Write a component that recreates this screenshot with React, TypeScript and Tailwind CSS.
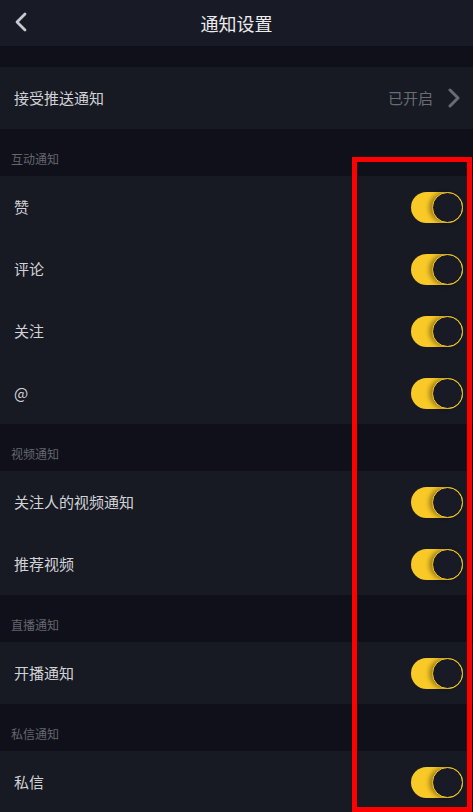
type Group = { title: string; items: string[] };

const groups: Group[] = [
  { title: "互动通知", items: ["赞", "评论", "关注", "@"] },
  { title: "视频通知", items: ["关注人的视频通知", "推荐视频"] },
  { title: "直播通知", items: ["开播通知"] },
  { title: "私信通知", items: ["私信"] },
];

// Yellow switch, always on in this screen
const Toggle = () => (
  <div className="relative w-[52px] h-[31px] rounded-full bg-[#f9c927]">
    <div className="absolute right-0 top-0 w-[31px] h-[31px] rounded-full bg-[#181a25] border border-[#f9c927] shadow-[-3px_0_4px_rgba(0,0,0,0.35)]" />
  </div>
);

const SectionTitle = ({ title }: { title: string }) => (
  <div className="h-[47px] flex items-end pb-[9px] pl-[11px]">
    <span className="text-[12px] leading-4 text-[#65676f]">{title}</span>
  </div>
);

const Row = ({ label }: { label: string }) => (
  <div className="h-[62px] flex items-center justify-between pl-[14px] pr-[10px] bg-[#171923]">
    <span className="text-[15px] text-[#d2d3d7]">{label}</span>
    <Toggle />
  </div>
);

const App = () => {
  return (
    <div
      className="relative min-h-screen bg-[#0f1019] overflow-hidden"
      style={{ fontFamily: '"Noto Sans CJK SC", "Noto Sans", sans-serif' }}
    >
      {/* Top bar */}
      <div className="h-[46px] relative flex items-center justify-center bg-[#181a25]">
        <svg className="absolute left-[14px] top-[12px]" width="14" height="20" viewBox="0 0 14 20">
          <polyline points="11,2 3,10 11,18" fill="none" stroke="#c9cacf" strokeWidth="2.8" strokeLinecap="round" strokeLinejoin="round" />
        </svg>
        <span className="text-[18px] text-[#ececee]">通知设置</span>
      </div>

      <div className="h-[21px]" />

      <div className="h-[62px] flex items-center justify-between pl-[14px] pr-[12px] bg-[#171923]">
        <span className="text-[15px] text-[#d2d3d7]">接受推送通知</span>
        <div className="flex items-center gap-[14px]">
          <span className="text-[15px] text-[#6a6c74]">已开启</span>
          <svg width="14" height="20" viewBox="0 0 14 20">
            <polyline points="3,2 11,10 3,18" fill="none" stroke="#6a6c74" strokeWidth="3" strokeLinecap="round" strokeLinejoin="round" />
          </svg>
        </div>
      </div>

      {groups.map((g) => (
        <div key={g.title}>
          <SectionTitle title={g.title} />
          {g.items.map((item) => (
            <Row key={item} label={item} />
          ))}
        </div>
      ))}

      {/* Red annotation frame */}
      <div className="absolute left-[352px] top-[157px] w-[120px] h-[655px] border-[5px] border-[#ff0000] pointer-events-none" />
    </div>
  );
};

export default App;
